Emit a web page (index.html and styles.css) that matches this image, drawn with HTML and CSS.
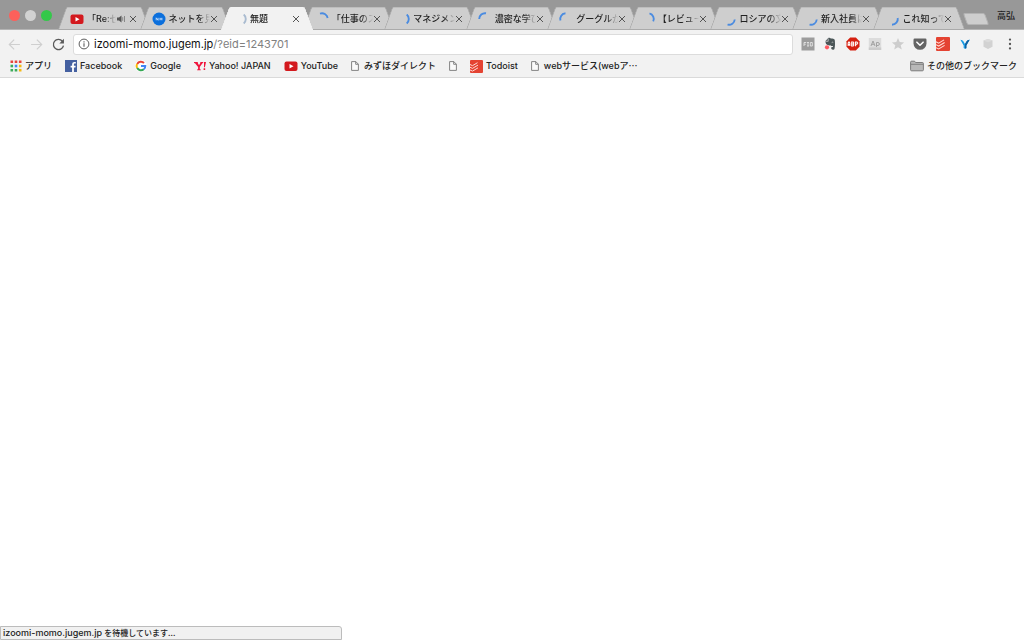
FILE: index.html
```html
<!DOCTYPE html>
<html lang="ja">
<head>
<meta charset="utf-8">
<title>無題</title>
<link rel="stylesheet" href="styles.css">
</head>
<body>
<svg class="defs" aria-hidden="true">
  <symbol id="close" viewBox="0 0 8 8"><path d="M1 1l6 6M7 1l-6 6" stroke="#555" stroke-width="1"/></symbol>
  <symbol id="tube" viewBox="0 0 14 14"><rect x=".5" y="2.500" width="13" height="9.500" rx="2" fill="#d3191e"/><path d="M5.500 5v4.500l4-2.250z" fill="#fff"/></symbol>
  <symbol id="page" viewBox="0 0 8 10"><path d="M.6.6h4.200L7.400 3.200v6.200H.6z" fill="#fafafa" stroke="#777" stroke-width=".9"/><path d="M4.700.6v2.700h2.700" fill="none" stroke="#777" stroke-width=".9"/></symbol>
  <symbol id="todoist" viewBox="0 0 13 13"><rect width="13" height="13" rx="1" fill="#e44332"/><path d="M0 4.500l2.500 1.200 5-3M0 7.200l2.500 1.200 5.500-3.300M0 9.900l2.500 1.200 5.500-3.300" fill="none" stroke="#ffd9d3" stroke-width="1"/></symbol>
  <symbol id="arc" viewBox="0 0 14 14"><path d="M7 1.200A5.800 5.800 0 0 1 12.700 8" fill="none" stroke="currentColor" stroke-width="1.900"/></symbol>
</svg>
<div class="browser">
  <header class="tabstrip">
    <div class="lights"><button class="light red" aria-label="閉じる"></button><button class="light gray" aria-label="しまう"></button><button class="light green" aria-label="拡大"></button></div>
    <nav class="tabs">
      <div class="tab"><svg class="fav"><use href="#tube"/></svg><span class="title">「Re:ゼロ</span><svg class="sound" viewBox="0 0 9 8"><path d="M0 2.500h2L4.500.5v7L2 5.500H0z" fill="#555"/><path d="M5.700 2.200v3.600M7.500 1v6" stroke="#777" stroke-width=".8"/></svg><button class="close" aria-label="タブを閉じる"><svg><use href="#close"/></svg></button></div>
      <div class="tab"><svg class="fav" viewBox="0 0 14 14"><circle cx="7" cy="7" r="6.500" fill="#0b6fdc"/><path d="M4.200 8.300V5.800l1.900 2.500V5.800M8 5.800v2.500M9.900 5.800v2.500M8 7h1.900" stroke="#d8eaff" stroke-width=".8" fill="none"/></svg><span class="title">ネットを見る</span><button class="close" aria-label="タブを閉じる"><svg><use href="#close"/></svg></button></div>
      <div class="tab active"><svg class="fav spin right waiting"><use href="#arc"/></svg><span class="title">無題</span><button class="close" aria-label="タブを閉じる"><svg><use href="#close"/></svg></button></div>
      <div class="tab"><svg class="fav spin topright"><use href="#arc"/></svg><span class="title">「仕事のスピ</span><button class="close" aria-label="タブを閉じる"><svg><use href="#close"/></svg></button></div>
      <div class="tab"><svg class="fav spin right"><use href="#arc"/></svg><span class="title">マネジメント</span><button class="close" aria-label="タブを閉じる"><svg><use href="#close"/></svg></button></div>
      <div class="tab"><svg class="fav spin topleft"><use href="#arc"/></svg><span class="title">濃密な学びを</span><button class="close" aria-label="タブを閉じる"><svg><use href="#close"/></svg></button></div>
      <div class="tab"><svg class="fav spin left"><use href="#arc"/></svg><span class="title">グーグルが</span><button class="close" aria-label="タブを閉じる"><svg><use href="#close"/></svg></button></div>
      <div class="tab"><svg class="fav spin upright"><use href="#arc"/></svg><span class="title">【レビュー】</span><button class="close" aria-label="タブを閉じる"><svg><use href="#close"/></svg></button></div>
      <div class="tab"><svg class="fav spin bottom"><use href="#arc"/></svg><span class="title">ロシアの文豪</span><button class="close" aria-label="タブを閉じる"><svg><use href="#close"/></svg></button></div>
      <div class="tab"><svg class="fav spin bottom"><use href="#arc"/></svg><span class="title">新入社員は</span><button class="close" aria-label="タブを閉じる"><svg><use href="#close"/></svg></button></div>
      <div class="tab"><svg class="fav spin lowright"><use href="#arc"/></svg><span class="title">これ知って</span><button class="close" aria-label="タブを閉じる"><svg><use href="#close"/></svg></button></div>
    </nav>
    <button class="newtab" aria-label="新しいタブ"></button>
    <button class="profile">高弘</button>
  </header>
  <div class="toolbar">
    <div class="navs">
      <button class="nav" aria-label="戻る"><svg viewBox="0 0 12 12"><path d="M11 6H1.500M5.700 1.500L1.200 6l4.500 4.500" fill="none" stroke="#cfcfcf" stroke-width="1.100"/></svg></button>
      <button class="nav" aria-label="進む"><svg viewBox="0 0 12 12"><path d="M1 6h9.500M6.300 1.500L10.800 6l-4.500 4.500" fill="none" stroke="#cfcfcf" stroke-width="1.100"/></svg></button>
      <button class="nav" aria-label="再読み込み"><svg viewBox="0 0 12 12"><path d="M9.600 3A4.700 4.700 0 1 0 10.600 7" fill="none" stroke="#5a5a5a" stroke-width="1.200"/><path d="M11 .8v4.200H6.800z" fill="#5a5a5a"/></svg></button>
    </div>
    <div class="omnibox">
      <svg class="info" viewBox="0 0 12 12"><circle cx="6" cy="6" r="4.900" fill="none" stroke="#5c5c5c" stroke-width="1"/><path d="M6 5.300v3.400M6 3.200v1.200" stroke="#5c5c5c" stroke-width="1.100"/></svg>
      <div class="url" role="textbox" aria-label="アドレス" contenteditable="true" spellcheck="false">izoomi-momo.jugem.jp<span class="path">/?eid=1243701</span></div>
    </div>
    <div class="exts">
      <button class="ext" aria-label="FIO"><svg viewBox="0 0 14 14"><rect x=".5" y=".5" width="13" height="13" fill="#9c9c9c"/><path d="M3 9V5.500h2.200M3 7.200h1.800M6 5.500h2M7 5.500V9M6 9h2M9.300 5.500h2V9h-2z" fill="none" stroke="#e4e4e4" stroke-width=".9"/></svg></button>
      <button class="ext" aria-label="Evernote"><svg viewBox="0 0 14 14"><path d="M2.500 4L5 1.300c1-.8 2.300-.4 2.800.2 1.800 0 3.500.3 3.900 1.200.5 2.900.4 6.800-.2 9-.3 1.300-3.400 1.400-3.300-.6 0-1 .9-1.300 1.700-1V9C8.800 9 8 9 7.600 8.200 6.500 9 4 8 3.100 7 2.600 6.200 2.400 5 2.500 4z" fill="#4b5658"/><path d="M8.700 5.500c.4-.6 1.200-.5 1.400.3M2.600 4.300h2.600V1.500" stroke="#ddd" stroke-width=".7" fill="none"/><circle cx="4" cy="10.300" r="2.100" fill="#ff5961"/></svg></button>
      <button class="ext" aria-label="Adblock Plus"><svg viewBox="0 0 14 14"><path d="M4.200.5h5.600l3.700 3.700v5.600l-3.700 3.700H4.200L.5 9.800V4.200z" fill="#d52010"/><path d="M2.200 9V6l.8-1 .8 1v3M2.200 7.500h1.600M5.700 5v4h1.500l.7-1-.7-1 .7-1-.7-1zM5.700 7h1.500M9.600 9.200V5h1.300l.8 1-.8 1.200H9.600" fill="none" stroke="#fff" stroke-width="1.100"/></svg></button>
      <button class="ext" aria-label="Ap"><svg viewBox="0 0 14 14"><rect x=".8" y="1" width="12.400" height="12" fill="#dcdcdc"/><path d="M.8 10.500h12.400V13H.8z" fill="#cbcbcb"/><path d="M3 9l2-5 2 5M3.700 7.300h2.600M8.500 10V5.500h1.600c1.700 0 1.700 3 0 3H8.500" fill="none" stroke="#a3a3a3" stroke-width="1"/></svg></button>
      <button class="ext" aria-label="スター"><svg viewBox="0 0 14 14"><path d="M7 1l1.700 4.100 4.400.3-3.400 2.900 1.100 4.300L7 10.300l-3.800 2.300 1.100-4.300L.9 5.400l4.400-.3z" fill="#cdcdcd"/></svg></button>
      <button class="ext" aria-label="Pocket"><svg viewBox="0 0 14 14"><path d="M1.700 1.500h10.600q1.200 0 1.200 1.200v3.800a6.500 6.300 0 0 1-13 0V2.700q0-1.200 1.200-1.200z" fill="#646464"/><path d="M3.900 5.200L7 8.200l3.100-3" fill="none" stroke="#fff" stroke-width="1.600" stroke-linecap="round" stroke-linejoin="round"/></svg></button>
      <button class="ext" aria-label="Todoist"><svg viewBox="0 0 13 13"><use href="#todoist"/></svg></button>
      <button class="ext" aria-label="Y"><svg viewBox="0 0 14 14"><path d="M1.500 2.300q3-.3 4 1.700L7 6.500 8.500 4q1-2 4-1.700L8.900 8.400v3.300q-1.900 1-3.800 0V8.400z" fill="#fff"/><path d="M2.300 2.800q2.200-.2 3.100 1.500L7 7l1.600-2.700q.9-1.700 3.100-1.500L8.400 8.400v2.900q-1.400.7-2.800 0V8.400z" fill="#1c9be2"/><path d="M7 7l1.600-2.700q.9-1.700 3.100-1.500L8.400 8.400v2.900q-.7.300-1.400.3z" fill="#12609f"/></svg></button>
      <button class="ext" aria-label="拡張機能"><svg viewBox="0 0 14 14"><path d="M7 2l4.500 1.500v6.300L7 12 2.500 9.800V3.500z" fill="#d2d2d2"/><path d="M2.500 3.500L7 5.300l4.500-1.800L7 2z" fill="#dcdcdc"/></svg></button>
      <button class="ext" aria-label="メニュー"><svg viewBox="0 0 14 14"><g fill="#555"><circle cx="7" cy="2.600" r="1.150"/><circle cx="7" cy="7" r="1.150"/><circle cx="7" cy="11.400" r="1.150"/></g></svg></button>
    </div>
  </div>
  <nav class="bookmarks">
    <a class="mark" href="#"><svg class="ic" viewBox="0 0 12 12"><g fill="#e8453c"><path d="M.5.5h2.600v2.600H.5zM4.700.5h2.600v2.600H4.700zM8.900.5h2.600v2.600H8.900z"/></g><path d="M.5 4.700h2.600v2.600H.5z" fill="#3cab5a"/><path d="M4.700 4.700h2.600v2.600H4.700z" fill="#4285f4"/><path d="M8.900 4.700h2.600v2.600H8.900z" fill="#f5b912"/><path d="M.5 8.900h2.600v2.600H.5zM4.700 8.900h2.600v2.600H4.700z" fill="#3cab5a"/><path d="M8.900 8.900h2.600v2.600H8.900z" fill="#f5b912"/></svg>アプリ</a>
    <a class="mark" href="#"><svg class="ic" viewBox="0 0 12 12"><path d="M0 0h12v12H0z" fill="#4460a0"/><path d="M7.100 12V7.500H5.600V5.700h1.500V4.400c0-1.700 1-2.500 2.400-2.500h1.300v1.700h-.9c-.8 0-1 .4-1 1v1.100h1.800l-.3 1.800H8.900V12z" fill="#fff"/></svg>Facebook</a>
    <a class="mark" href="#"><svg class="ic" viewBox="0 0 12 12"><circle cx="6" cy="6" r="6" fill="#fff"/><g fill="none" stroke-width="2"><path d="M2.200 3.900A4.300 4.300 0 0 1 9 3" stroke="#ea4335"/><path d="M2.200 3.900a4.300 4.300 0 0 0 0 4.200" stroke="#fbbc05"/><path d="M2.200 8.100A4.300 4.300 0 0 0 8.800 9.300" stroke="#34a853"/><path d="M8.800 9.300A4.300 4.300 0 0 0 10.300 6H6" stroke="#4285f4"/></g></svg>Google</a>
    <a class="mark" href="#"><svg class="ic" viewBox="0 0 12 12"><path d="M0 2h3.800v1L5 5.300 6.300 3V2h2.900v1l-.8.200L5.800 7v2.200l1 .2v.9H3.100v-.9l1-.2V7L1 3.200 0 3zM10 2h2l-1.100 5.200h-.9zM9.600 8.200h1.600v1.700H9.600z" fill="#f0143c"/></svg>Yahoo! JAPAN</a>
    <a class="mark" href="#"><svg class="ic wide"><use href="#tube"/></svg>YouTube</a>
    <a class="mark doc" href="#"><svg class="pg"><use href="#page"/></svg>みずほダイレクト</a>
    <a class="mark" href="#" aria-label="ページ"><svg class="pg"><use href="#page"/></svg></a>
    <a class="mark" href="#"><svg class="ic tile"><use href="#todoist"/></svg>Todoist</a>
    <a class="mark doc" href="#"><svg class="pg"><use href="#page"/></svg><span>webサービス(webア<span class="cjk">…</span></span></a>
    <a class="mark other" href="#"><svg class="ic wide" viewBox="0 0 14 12"><path d="M.6 2.200q0-1 1-1h3l1 1.300h6.800q1 0 1 1v6.300q0 1-1 1H1.600q-1 0-1-1z" fill="#b9b9b9" stroke="#737373" stroke-width=".9"/><path d="M.8 4.300h12.400" stroke="#737373" stroke-width=".8"/></svg>その他のブックマーク</a>
  </nav>
  <main class="content"></main>
  <footer class="status"><span class="host">izoomi-momo.jugem.jp</span> を待機しています...</footer>
</div>
</body>
</html>
```

FILE: styles.css
```css
* { box-sizing: border-box; }
body {
  margin: 0;
  background: #fff;
  color: #222;
  font: 500 9px/14px Inter, "Noto Sans CJK JP", sans-serif;
}
button { padding: 0; border: 0; background: none; font: inherit; color: inherit; display: block; }
svg { display: block; flex: none; }
.defs { position: absolute; width: 0; height: 0; }
.cjk { font-family: "Noto Sans CJK JP", sans-serif; }
.browser { display: flex; flex-direction: column; height: 100vh; }

.tabstrip {
  display: flex;
  height: 30px;
  padding: 7px 9px 0 9px;
  background: #989898;
  border-bottom: 1px solid #b4b4b4;
}
.lights { display: flex; gap: 5px; padding-top: 3px; width: 49px; flex: none; }
.light { width: 11px; height: 11px; border-radius: 50%; }
.red { background: #fc605b; }
.gray { background: #d2d2d2; }
.green { background: #34c84a; }
.tabs { display: flex; flex: 1; min-width: 0; padding-right: 10px; }
.tab {
  position: relative;
  isolation: isolate;
  display: flex;
  align-items: center;
  flex: 1 1 0;
  min-width: 0;
  height: 23px;
  margin-right: -10px;
  padding: 0 13px 0 12px;
}
.tab::before, .tab::after {
  content: "";
  position: absolute;
  z-index: -1;
  top: 0;
  bottom: 0;
  background: #cecece;
  border: 0 solid #aaa;
  border-top: 1px solid #bdbdbd;
  border-bottom-width: 1px;
}
.tab::before { left: 4px; right: 40%; transform: skewX(-20deg); border-left-width: 1px; border-top-left-radius: 2px; }
.tab::after { right: 4px; left: 40%; transform: skewX(20deg); border-right-width: 1px; border-top-right-radius: 2px; }
.tab.active { z-index: 2; }
.tab.active::before, .tab.active::after { background: #f2f2f2; border-color: #f2f2f2; }
.fav { width: 14px; height: 14px; margin-right: 3px; }
.spin { color: #4a8be0; }
.waiting { color: #a9bbd0; }
.right { transform: rotate(40deg); }
.upright { transform: rotate(15deg); }
.topright { transform: rotate(-20deg); }
.topleft { transform: rotate(-90deg); }
.left { transform: rotate(-105deg); }
.bottom { transform: rotate(95deg); }
.lowright { transform: rotate(80deg); }
.title {
  flex: 1;
  min-width: 0;
  overflow: hidden;
  white-space: nowrap;
  mask-image: linear-gradient(to left, transparent, #000 12px);
}
.sound { width: 9px; height: 8px; margin: 0 3px 0 1px; }
.close { width: 8px; flex: none; }
.close svg { width: 8px; height: 8px; }
.newtab {
  flex: none;
  width: 22px;
  height: 12px;
  margin-top: 6px;
  background: #cecece;
  border: 1px solid #b4b4b4;
  border-radius: 2px;
  transform: skewX(20deg);
}
.profile { flex: none; height: 18px; margin-left: 10px; }

.toolbar { display: flex; align-items: center; gap: 8px; height: 25px; padding: 0 7px 0 8px; background: #f2f2f2; }
.navs { display: flex; gap: 9px; padding-top: 3px; }
.navs .nav svg { width: 13px; height: 13px; }
.omnibox {
  display: flex;
  align-items: center;
  gap: 4px;
  flex: 1;
  min-width: 0;
  height: 21px;
  margin-top: 3px;
  padding: 0 4px;
  background: #fff;
  border: 1px solid #dcdcdc;
  border-radius: 3px;
}
.info { width: 12px; height: 12px; }
.url { flex: 1; font-size: 11px; font-weight: 400; line-height: 18px; color: #111; outline: 0; white-space: nowrap; }
.path { color: #808080; }
.exts { display: flex; justify-content: space-between; width: 216px; padding-top: 3px; }
.ext svg { width: 14px; height: 14px; }

.bookmarks {
  display: flex;
  align-items: center;
  gap: 13px;
  height: 23px;
  padding: 0 7px 0 10px;
  background: #f2f2f2;
  border-bottom: 1px solid #dadada;
}
.mark { display: flex; align-items: center; gap: 3px; color: inherit; text-decoration: none; white-space: nowrap; }
.mark.doc { gap: 5px; }
.ic { width: 12px; height: 12px; }
.ic.wide { width: 14px; height: 14px; }
.ic.tile { width: 13px; height: 13px; }
.pg { width: 8px; height: 10px; }
.other { margin-left: auto; }
.content { flex: 1; }
.status {
  width: 342px;
  max-width: 100%;
  height: 14px;
  padding: 0 2px;
  line-height: 12px;
  font-size: 8px;
  background: #f1f1f1;
  border: 1px solid #bcbcbc;
  border-radius: 0 3px 0 0;
}
.host { font-size: 9px; }
```
